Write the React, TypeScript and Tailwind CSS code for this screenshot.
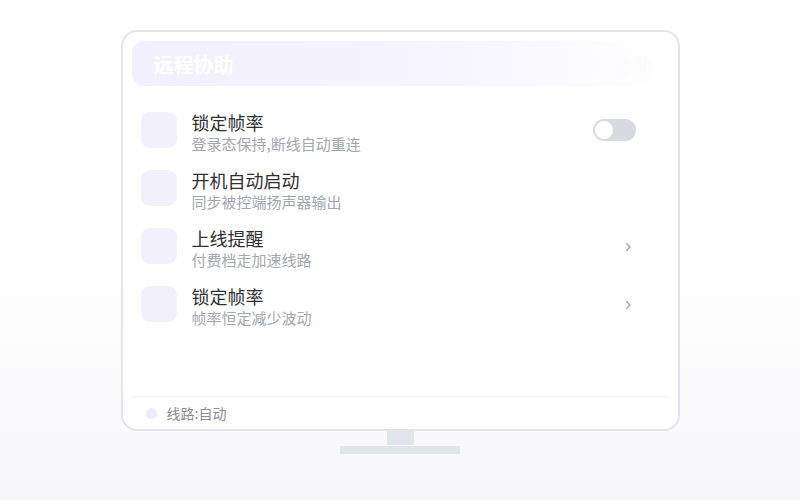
import React from "react";

const rows = [
  { title: "锁定帧率", sub: "登录态保持,断线自动重连", right: "toggle" },
  { title: "开机自动启动", sub: "同步被控端扬声器输出", right: "none" },
  { title: "上线提醒", sub: "付费档走加速线路", right: "chevron" },
  { title: "锁定帧率", sub: "帧率恒定减少波动", right: "chevron" },
];

function Chevron() {
  return (
    <svg width="8" height="12" viewBox="0 0 8 12" fill="none">
      <path d="M2.5 2.5 L6 6 L2.5 9.5" stroke="#9ca3af" strokeWidth="1.4" strokeLinecap="round" strokeLinejoin="round" />
    </svg>
  );
}

function Toggle() {
  return (
    <div className="w-[43px] h-[22px] rounded-full bg-[#d7dae1] relative">
      <div className="absolute left-[1px] top-[1px] w-[20px] h-[20px] rounded-full bg-white border border-[#d7dae1]" />
    </div>
  );
}

export default function App() {
  return (
    <div
      className="w-[800px] h-[500px] flex flex-col items-center pt-[30px] bg-gradient-to-b from-white from-50% to-[#f7f7fa]"
      style={{ fontFamily: '"Noto Sans CJK SC", "Noto Sans", sans-serif' }}
    >
      <div className="w-[559px] h-[401px] border-2 border-[#e3e5ea] rounded-[16px] bg-white flex flex-col px-[9px] pt-[9px]">
        <div className="h-[45px] rounded-[12px] bg-gradient-to-r from-[#f3f0fe] via-[#f5f3fe] to-white flex items-center justify-between pl-[22px] pr-[16px] pt-[3px]">
          <span className="text-[20px] font-bold text-white leading-none">远程协助</span>
          <span className="text-[20px] font-bold text-[#fcfcfd] leading-none">远程协助</span>
        </div>
        <div className="flex flex-col gap-[22px] pt-[26px] pl-[9px] pr-[33px]">
          {rows.map((r, i) => (
            <div key={i} className="flex items-start h-[36px]">
              <div className="w-[36px] h-[36px] rounded-[9px] bg-[#f3f0fd] shrink-0" />
              <div className="ml-[15px] mt-[-1px] flex flex-col">
                <div className="text-[18px] leading-[22px] text-[#2f2f33]">{r.title}</div>
                <div className="text-[15px] leading-[22px] text-[#a3a6ae]">{r.sub}</div>
              </div>
              <div className="ml-auto h-[36px] flex items-center">
                {r.right === "toggle" && <Toggle />}
                {r.right === "chevron" && (
                  <div className="w-[12px] flex justify-start mt-[2px]">
                    <Chevron />
                  </div>
                )}
              </div>
            </div>
          ))}
        </div>
        <div className="flex-1" />
        <div className="border-t border-[#eef0f3] h-[33px] flex items-center pl-[14px]">
          <div className="w-[11px] h-[11px] rounded-full bg-[#efebfd]" />
          <span className="ml-[10px] text-[14px] text-[#8b8d93] leading-none">线路:自动</span>
        </div>
      </div>
      <div className="w-[27px] h-[14px] bg-[#e2e5ea]" />
      <div className="w-[120px] h-[8px] mt-[1px] bg-[#e2e5ea]" />
    </div>
  );
}
